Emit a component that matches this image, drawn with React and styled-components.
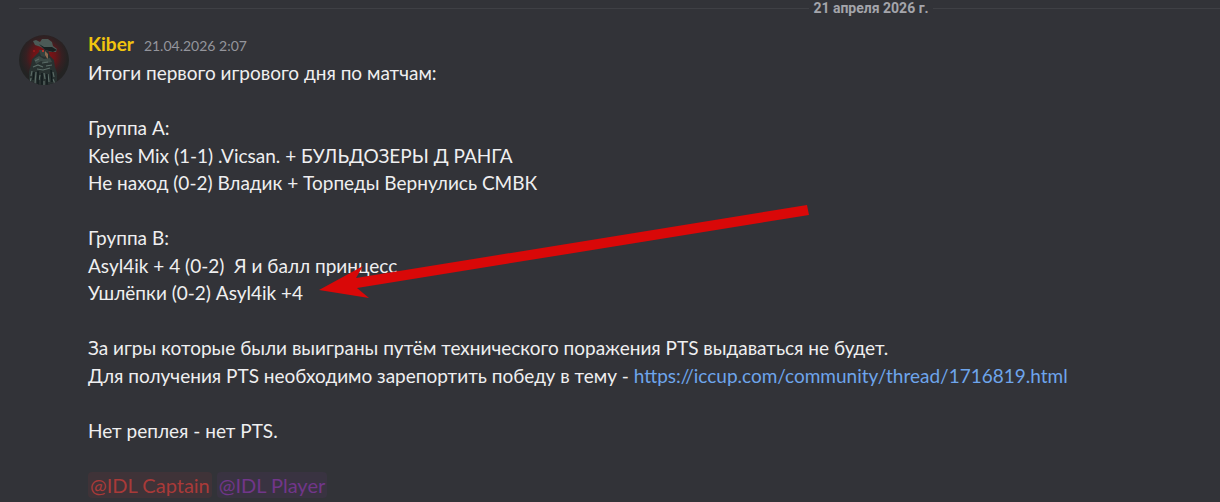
import React from "react";
import styled, { createGlobalStyle } from "styled-components";

const GlobalStyle = createGlobalStyle`
  * { box-sizing: border-box; }
  body {
    margin: 0;
    background: #323338;
    color: #efeff0;
    font-family: Lato, Roboto, sans-serif;
    overflow: hidden;
  }
`;

const Chat = styled.main`
  display: flex;
  flex-direction: column;
  gap: 14px;
  min-height: 100vh;
  padding-left: 19px;
`;

const Divider = styled.div`
  display: flex;
  align-items: center;
`;

const Rule = styled.span`
  flex: ${({ $grow }) => $grow} 1 0;
  height: 1px;
  background: #3f4045;
`;

const DateLabel = styled.time`
  padding: 0 4px;
  color: #a4a5ab;
  font-family: Roboto, sans-serif;
  font-size: 14px;
  font-weight: 700;
  line-height: 17px;
  white-space: nowrap;
`;

const Message = styled.article`
  position: relative;
  display: flex;
  align-items: flex-start;
  gap: 19px;
`;

const Avatar = styled.svg`
  flex: none;
  width: 50px;
  height: 50px;
  margin-top: 4px;
`;

const Content = styled.div`
  flex: 1;
  min-width: 0;
`;

const Header = styled.header`
  display: flex;
  align-items: baseline;
  gap: 10px;
  line-height: 26px;
`;

const Author = styled.h2`
  margin: 0;
  color: #f1c40f;
  font-size: 19px;
  font-weight: 700;
`;

const Timestamp = styled.time`
  color: #94959c;
  font-size: 14px;
`;

const Body = styled.div`
  font-size: 19px;
  line-height: 1.45;
  white-space: pre-wrap;
`;

const Link = styled.a`
  color: #6ea5ec;
  text-decoration: none;
`;

const Mention = styled.span`
  padding: 1px 2px;
  border-radius: 4px;
  font-size: 20px;
  line-height: 1;
  color: ${({ $role }) => ($role === "captain" ? "#a93a38" : "#71368a")};
  background: ${({ $role }) => ($role === "captain" ? "#3f3338" : "#393341")};
`;

const Arrow = styled.svg`
  position: absolute;
  top: 173px;
  left: 300px;
  width: 490px;
  height: 95px;
  pointer-events: none;
`;

const url = "https://iccup.com/community/thread/1716819.html";

function AvatarImage() {
  return (
    <Avatar viewBox="0 0 50 50" role="img" aria-label="Kiber">
      <defs>
        <radialGradient id="glow" cx="50%" cy="43%" r="48%">
          <stop offset="0" stopColor="#8c1116" />
          <stop offset="0.45" stopColor="#6b1417" />
          <stop offset="0.75" stopColor="#352022" />
          <stop offset="1" stopColor="#232323" />
        </radialGradient>
        <clipPath id="disc"><circle cx="25" cy="25" r="25" /></clipPath>
      </defs>
      <g clipPath="url(#disc)">
        <rect width="50" height="50" fill="url(#glow)" />
        <path d="M10 50 10 36 12 30 13 24 18 19 22 15 29 15 31 21 35 25 36 32 38 38 38 50Z" fill="#283130" />
        <path d="M14 6 17 5 21 7 23 4 29 4 33 7 34 11 38 14 37 17 32 17 26 15 22 12 16 10Z" fill="#4b5a56" />
        <path d="M20 9 25 12 33 12 38 15 34 17 26 15Z" fill="#182020" />
        <path d="M20 15 25 15 27 19 26 22 22 21Z" fill="#35423f" />
        <path d="M26 16 29 19 29 25 26 20Z" fill="#8c6a50" />
        <circle cx="24" cy="16" r="1" fill="#e33028" />
        <circle cx="15" cy="16" r="0.7" fill="#d8211f" />
        <path d="M15 24 20 21 25 24 31 23 33 27 28 28 22 26 17 29Z" fill="#3c4946" />
        <g fill="none" stroke="#5b6c67" strokeWidth="1.2">
          <path d="M16 26 20 24M23 28 29 27M14 32 19 30 24 32M27 31 33 30M18 34 24 35 31 33" />
          <path d="M13 36 12 41M12 43 11 48M17 37 16 49M21 40 20 45M25 38 26 44M25 46 25 50M29 39 30 47M34 37 35 42M34 44 36 49" />
        </g>
        <path d="M15 37 14 45M19 36 19 50M23 38 23 50M28 39 28 50M32 35 33 47" stroke="#111b1c" strokeWidth="1.4" />
      </g>
    </Avatar>
  );
}

export default function App() {
  return (
    <>
      <GlobalStyle />
      <Chat>
        <Divider>
          <Rule $grow={11} />
          <DateLabel dateTime="2026-04-21">21 апреля 2026 г.</DateLabel>
          <Rule $grow={4} />
        </Divider>
        <Message>
          <AvatarImage />
          <Content>
            <Header>
              <Author>Kiber</Author>
              <Timestamp dateTime="2026-04-21T02:07">21.04.2026 2:07</Timestamp>
            </Header>
            <Body>
              {`Итоги первого игрового дня по матчам:

Группа А:
Keles Mix (1-1) .Vicsan. + БУЛЬДОЗЕРЫ Д РАНГА
Не наход (0-2) Владик + Торпеды Вернулись СМВК

Группа В:
Asyl4ik + 4 (0-2)  Я и балл принцесс
Ушлёпки (0-2) Asyl4ik +4

За игры которые были выиграны путём технического поражения PTS выдаваться не будет.
Для получения PTS необходимо зарепортить победу в тему - `}
              <Link href={url}>{url}</Link>
              {`

Нет реплея - нет PTS.

`}
              <Mention $role="captain">@IDL Captain</Mention>{" "}
              <Mention $role="player">@IDL Player</Mention>
            </Body>
          </Content>
          <Arrow viewBox="0 0 490 95" aria-hidden="true">
            <path d="M0 86 44 62 37 74 488 1 490 11 38 84 50 94Z" fill="#d90808" />
          </Arrow>
        </Message>
      </Chat>
    </>
  );
}
